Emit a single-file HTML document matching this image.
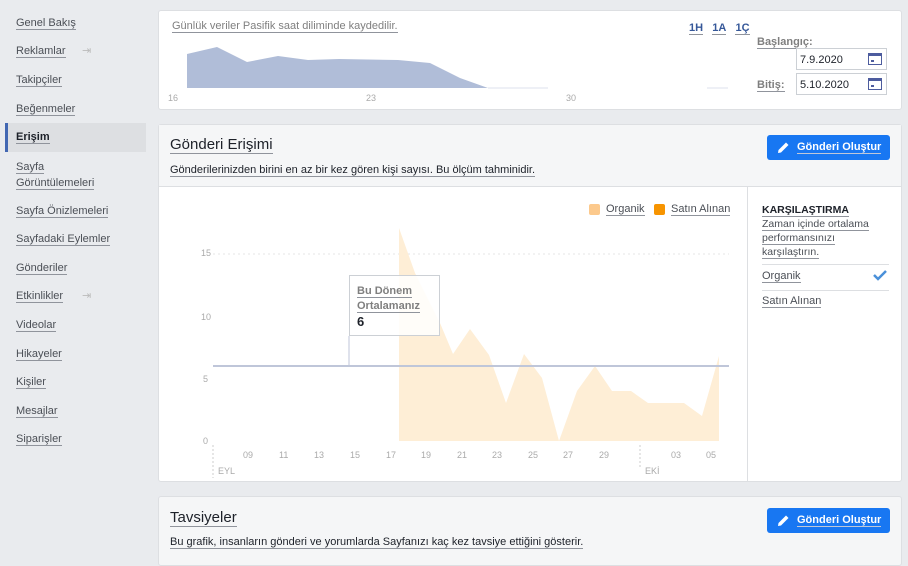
<!DOCTYPE html>
<html><head><meta charset="utf-8"><style>
*{margin:0;padding:0;box-sizing:border-box}
body{width:908px;height:555px;overflow:hidden;background:#e9ebee;font-family:"Liberation Sans",Arial,sans-serif;position:relative;color:#4b4f56}
.u{border-bottom:1px solid #90949c}
.nav{position:absolute;left:16px;font-size:11px;color:#4b4f56;line-height:14px}
.nav span{border-bottom:1px solid #90949c}
.act{position:absolute;left:5px;top:123px;width:141px;height:29px;background:#dddfe2;border-left:3px solid #4267b2}
.card{position:absolute;left:158px;width:744px;background:#fff;border:1px solid #dddfe2;border-radius:3px}
.abs{position:absolute}
.btn{position:absolute;background:#1877f2;border-radius:3px;color:#fff;font-weight:bold;font-size:11px;width:123px;height:25px}
.btn span{position:absolute;left:30px;top:6px;border-bottom:1px solid #c0c8d8;line-height:12px}
.btn svg{position:absolute;left:10px;top:6px}
.date{position:absolute;left:637px;width:91px;height:22px;border:1px solid #ccd0d5;font-size:11px;color:#1d2129;padding:5px 0 0 3px}
.cal{position:absolute;right:4px;top:4px;width:14px;height:12px;border:1px solid #4d5c9e;border-top:3px solid #4d5c9e;background:#fff}
.cal:after{content:"";position:absolute;left:2px;top:4px;width:3px;height:2px;background:#4d5c9e}
</style></head><body>
<div class="act"></div>
<div class="nav" style="top:16px"><span>Genel Bakış</span></div>
<div class="nav" style="top:44px"><span>Reklamlar</span><span style="border:none;position:absolute;left:66px;color:#bbb">⇥</span></div>
<div class="nav" style="top:73px"><span>Takipçiler</span></div>
<div class="nav" style="top:102px"><span>Beğenmeler</span></div>
<div class="nav" style="top:130px;font-weight:bold;color:#1d2129"><span>Erişim</span></div>
<div class="nav" style="top:159px;line-height:16px"><span>Sayfa</span><br><span>Görüntülemeleri</span></div>
<div class="nav" style="top:204px"><span>Sayfa Önizlemeleri</span></div>
<div class="nav" style="top:232px"><span>Sayfadaki Eylemler</span></div>
<div class="nav" style="top:261px"><span>Gönderiler</span></div>
<div class="nav" style="top:289px"><span>Etkinlikler</span><span style="border:none;position:absolute;left:66px;color:#bbb">⇥</span></div>
<div class="nav" style="top:318px"><span>Videolar</span></div>
<div class="nav" style="top:347px"><span>Hikayeler</span></div>
<div class="nav" style="top:375px"><span>Kişiler</span></div>
<div class="nav" style="top:404px"><span>Mesajlar</span></div>
<div class="nav" style="top:432px"><span>Siparişler</span></div>

<div class="card" style="top:10px;height:100px">
 <div class="abs" style="left:13px;top:9px;font-size:11px;color:#7f7f7f"><span class="u">Günlük veriler Pasifik saat diliminde kaydedilir.</span></div>
 <div class="abs" style="left:530px;top:11px;font-size:11px;font-weight:bold;color:#365899"><span class="u">1H</span>&nbsp;&nbsp; <span class="u">1A</span>&nbsp;&nbsp; <span class="u">1Ç</span></div>
 <div class="abs" style="left:598px;top:25px;font-size:11px;font-weight:bold;color:#7f7f7f"><span class="u">Başlangıç:</span></div>
 <div class="date" style="top:37px">7.9.2020<div class="cal"></div></div>
 <div class="abs" style="left:598px;top:68px;font-size:11px;font-weight:bold;color:#7f7f7f"><span class="u">Bitiş:</span></div>
 <div class="date" style="top:62px">5.10.2020<div class="cal"></div></div>
</div>
<svg class="abs" style="left:0;top:0" width="908" height="110">
 <polygon fill="#b0bdd8" points="187,54 217,47 247,62 278,56 308,60 339,59 398,60 430,63 460,78 488,88 187,88"/>
 <line x1="488" y1="88" x2="548" y2="88" stroke="#dde1ec"/>
 <line x1="707" y1="88" x2="728" y2="88" stroke="#dde1ec"/>
 <g font-size="9" fill="#aaa" font-family="Liberation Sans"><text x="168" y="101">16</text><text x="366" y="101">23</text><text x="566" y="101">30</text></g>
</svg>

<div class="card" style="top:124px;height:358px">
 <div class="abs" style="left:0;top:0;width:742px;height:62px;background:#f5f6f7;border-bottom:1px solid #dddfe2"></div>
 <div class="abs" style="left:11px;top:11px;font-size:15px;color:#1d2129"><span class="u">Gönderi Erişimi</span></div>
 <div class="abs" style="left:11px;top:39px;font-size:11px;color:#1d2129"><span class="u">Gönderilerinizden birini en az bir kez gören kişi sayısı. Bu ölçüm tahminidir.</span></div>
 <div class="btn" style="left:608px;top:10px"><svg width="13" height="13" viewBox="0 0 13 13"><path d="M1 12 L1.5 9 L9 1.5 L11.5 4 L4 11.5 Z" fill="#fff"/></svg><span>Gönderi Oluştur</span></div>
 <div class="abs" style="left:588px;top:62px;width:1px;height:295px;background:#dddfe2"></div>
 <div class="abs" style="left:603px;top:78px;font-size:10.5px;line-height:14px;color:#4b4f56;width:130px"><b style="color:#1d2129" class="u">KARŞILAŞTIRMA</b><br><span class="u">Zaman içinde ortalama</span><br><span class="u">performansınızı</span><br><span class="u">karşılaştırın.</span></div>
 <div class="abs" style="left:603px;top:139px;width:127px;height:1px;background:#dddfe2"></div>
 <div class="abs" style="left:603px;top:145px;font-size:11px"><span class="u">Organik</span></div>
 <svg class="abs" style="left:714px;top:144px" width="14" height="12"><path d="M1 6 L5 10 L13 2" stroke="#4a90d9" stroke-width="2.5" fill="none"/></svg>
 <div class="abs" style="left:603px;top:165px;width:127px;height:1px;background:#dddfe2"></div>
 <div class="abs" style="left:603px;top:170px;font-size:11px"><span class="u">Satın Alınan</span></div>
</div>
<svg class="abs" style="left:0;top:0" width="908" height="482">
 <line x1="213" y1="254" x2="729" y2="254" stroke="#e4e4e4" stroke-dasharray="2,3"/>
 <polygon fill="#feeed6" points="399,228 415,273 440,323 453,354 470,329 489,355 506,403 524,354 542,378 559,441 577,391 595,366 612,391 631,391 648,403 684,403 702,416 719,356 719,441 399,441"/>
 <line x1="213" y1="366" x2="729" y2="366" stroke="#bfc6d9" stroke-width="2"/>
 <line x1="349" y1="336" x2="349" y2="366" stroke="#bfc6d9"/>
 <rect x="349.5" y="275.5" width="90" height="60" fill="#fff" fill-opacity="0.85" stroke="#ccd0d5"/>
 <g font-size="9" fill="#aaa" font-family="Liberation Sans">
  <text x="201" y="256">15</text><text x="201" y="320">10</text><text x="203" y="382">5</text><text x="203" y="444">0</text>
  <text x="243" y="458">09</text><text x="279" y="458">11</text><text x="314" y="458">13</text><text x="350" y="458">15</text><text x="386" y="458">17</text><text x="421" y="458">19</text><text x="457" y="458">21</text><text x="492" y="458">23</text><text x="528" y="458">25</text><text x="563" y="458">27</text><text x="599" y="458">29</text><text x="671" y="458">03</text><text x="706" y="458">05</text>
  <text x="218" y="474">EYL</text><text x="645" y="474">EKİ</text>
 </g>
 <line x1="213" y1="445" x2="213" y2="478" stroke="#ccc" stroke-dasharray="2,2"/>
 <line x1="640" y1="445" x2="640" y2="468" stroke="#ccc" stroke-dasharray="2,2"/>
 <rect x="589" y="204" width="11" height="11" rx="2" fill="#fcc98c"/>
 <rect x="654" y="204" width="11" height="11" rx="2" fill="#f79400"/>
</svg>
<div class="abs" style="left:606px;top:203px;font-size:11px;color:#4b4f56"><span class="u">Organik</span></div>
<div class="abs" style="left:671px;top:203px;font-size:11px;color:#4b4f56"><span class="u">Satın Alınan</span></div>
<div class="abs" style="left:357px;top:284px;font-size:11px;line-height:15px;font-weight:bold;color:#7f7f7f"><span class="u">Bu Dönem</span><br><span class="u">Ortalamanız</span><br><span style="color:#1d2129;font-size:13px">6</span></div>

<div class="card" style="top:496px;height:70px;background:#f5f6f7">
 <div class="abs" style="left:11px;top:12px;font-size:15px;color:#1d2129"><span class="u">Tavsiyeler</span></div>
 <div class="abs" style="left:11px;top:39px;font-size:11px;color:#1d2129"><span class="u">Bu grafik, insanların gönderi ve yorumlarda Sayfanızı kaç kez tavsiye ettiğini gösterir.</span></div>
 <div class="btn" style="left:608px;top:11px"><svg width="13" height="13" viewBox="0 0 13 13"><path d="M1 12 L1.5 9 L9 1.5 L11.5 4 L4 11.5 Z" fill="#fff"/></svg><span>Gönderi Oluştur</span></div>
</div>
</body></html>
